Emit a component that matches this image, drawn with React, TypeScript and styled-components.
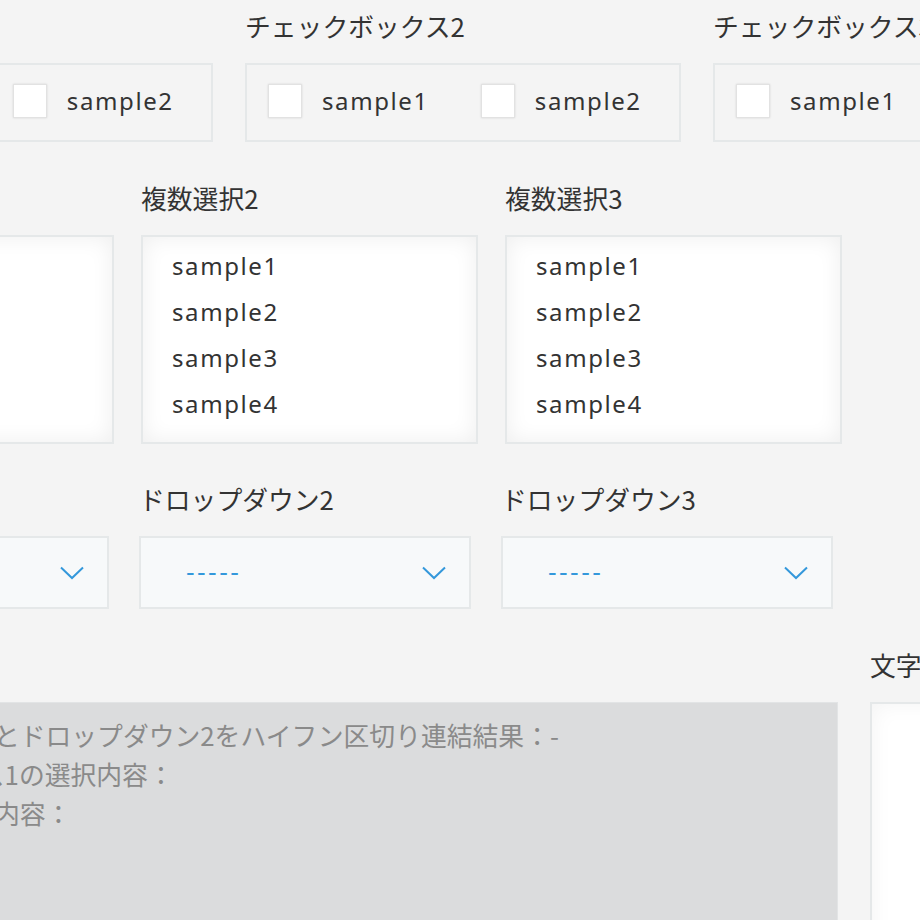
import React from "react";
import styled, { createGlobalStyle } from "styled-components";

const Global = createGlobalStyle`
  html, body {
    margin: 0;
    padding: 0;
    background: #f4f4f4;
    overflow: hidden;
  }
  body {
    font-family: "Noto Sans CJK JP", "Noto Sans", sans-serif;
    color: #333333;
  }
`;

const Page = styled.div`
  width: 1500px;
  margin-left: -223px;
  padding-top: 6px;
  display: flex;
  flex-direction: column;
  gap: 35.5px;
`;

const Row = styled.div<{ $gap: number }>`
  display: flex;
  align-items: flex-start;
  gap: ${(p) => p.$gap}px;
`;

const Field = styled.div<{ $width: number }>`
  width: ${(p) => p.$width}px;
  flex: none;
  display: flex;
  flex-direction: column;
`;

const Label = styled.div`
  font-family: "Noto Sans CJK JP", sans-serif;
  font-size: 25.8px;
  line-height: 40px;
  height: 40px;
  margin-bottom: 17px;
  color: #333333;
  white-space: nowrap;
`;

const CheckGroup = styled.div`
  box-sizing: border-box;
  height: 79px;
  border: 2px solid #e5e8e9;
  display: flex;
  align-items: center;
  padding-left: 21px;
  gap: 52px;
`;

const CheckItem = styled.label`
  display: flex;
  align-items: center;
  gap: 20px;
`;

const Box = styled.span`
  width: 34px;
  height: 34px;
  box-sizing: border-box;
  background: #ffffff;
  border: 1px solid #e2e2e2;
  box-shadow: 0 0 2px rgba(0, 0, 0, 0.12);
  margin-top: -4px;
`;

const OptionText = styled.span`
  font-family: "Noto Sans", "Noto Sans CJK JP", sans-serif;
  font-size: 24px;
  letter-spacing: 1.6px;
  color: #333333;
  margin-top: -4px;
`;

const ListBox = styled.div`
  box-sizing: border-box;
  height: 209px;
  background: #ffffff;
  border: 2px solid #e5e8e9;
  box-shadow: inset 0 0 22px rgba(0, 0, 0, 0.07);
  padding: 6px 0 0 29px;
  display: flex;
  flex-direction: column;
`;

const ListItem = styled.div`
  font-family: "Noto Sans", "Noto Sans CJK JP", sans-serif;
  font-size: 24px;
  letter-spacing: 1.6px;
  line-height: 46px;
  height: 46px;
  color: #333333;
`;

const Select = styled.div`
  box-sizing: border-box;
  height: 73px;
  background: #f7f9fa;
  border: 2px solid #e5e8e9;
  display: flex;
  align-items: center;
  justify-content: space-between;
  padding: 0 23px 0 45px;
`;

const Placeholder = styled.span`
  font-family: "DejaVu Sans", sans-serif;
  font-size: 24px;
  letter-spacing: 2.4px;
  color: #3498db;
`;

const Chevron = () => (
  <svg width="24" height="14" viewBox="0 0 24 14" fill="none">
    <path d="M1 1.5 L12 12 L23 1.5" stroke="#3498db" strokeWidth="2" />
  </svg>
);

const ResultBox = styled.div`
  box-sizing: border-box;
  width: 1061px;
  height: 260px;
  background: #dbdcdd;
  border: 1px solid #e2e4e5;
  padding: 12px 0 0 21px;
  flex: none;
`;

const ResultLine = styled.div`
  font-family: "Noto Sans CJK JP", sans-serif;
  font-size: 25.8px;
  line-height: 39px;
  color: #8a8a8a;
  white-space: nowrap;
`;

const TextArea = styled.div`
  box-sizing: border-box;
  height: 260px;
  background: #ffffff;
  border: 2px solid #e5e8e9;
  box-shadow: inset 0 0 22px rgba(0, 0, 0, 0.05);
`;

const checkFields = ["チェックボックス1", "チェックボックス2", "チェックボックス3"];
const multiFields = ["複数選択1", "複数選択2", "複数選択3"];
const dropFields = ["ドロップダウン1", "ドロップダウン2", "ドロップダウン3"];
const samples = ["sample1", "sample2", "sample3", "sample4"];

export default function App() {
  return (
    <>
      <Global />
      <Page>
        <Row $gap={32}>
          {checkFields.map((f) => (
            <Field key={f} $width={436}>
              <Label>{f}</Label>
              <CheckGroup>
                {["sample1", "sample2"].map((s) => (
                  <CheckItem key={s}>
                    <Box />
                    <OptionText>{s}</OptionText>
                  </CheckItem>
                ))}
              </CheckGroup>
            </Field>
          ))}
        </Row>
        <Row $gap={27}>
          {multiFields.map((f) => (
            <Field key={f} $width={337}>
              <Label>{f}</Label>
              <ListBox>
                {samples.map((s) => (
                  <ListItem key={s}>{s}</ListItem>
                ))}
              </ListBox>
            </Field>
          ))}
        </Row>
        <Row $gap={30}>
          {dropFields.map((f) => (
            <Field key={f} $width={332}>
              <Label>{f}</Label>
              <Select>
                <Placeholder>-----</Placeholder>
                <Chevron />
              </Select>
            </Field>
          ))}
        </Row>
        <Row $gap={32}>
          <Field $width={1061}>
            <Label>計算結果</Label>
            <ResultBox>
              <ResultLine>ドロップダウン1とドロップダウン2をハイフン区切り連結結果：-</ResultLine>
              <ResultLine>チェックボックス1の選択内容：</ResultLine>
              <ResultLine>複数選択1の選択内容：</ResultLine>
            </ResultBox>
          </Field>
          <Field $width={420}>
            <Label>文字列（複数行）</Label>
            <TextArea />
          </Field>
        </Row>
      </Page>
    </>
  );
}
